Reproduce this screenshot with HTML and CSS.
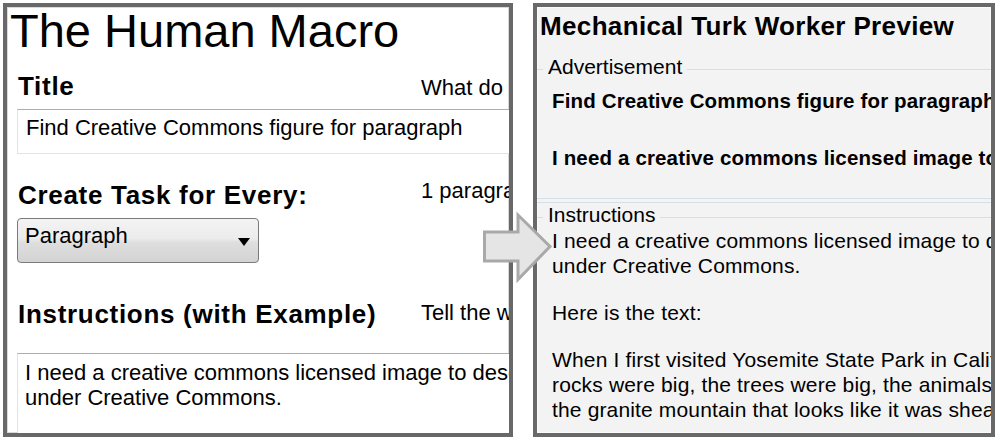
FILE: index.html
```html
<!DOCTYPE html>
<html lang="en">
<head>
<meta charset="utf-8">
<title>The Human Macro</title>
<link rel="stylesheet" href="styles.css">
</head>
<body>
<div class="stage">
  <section class="panel editor">
    <h1 class="app-title">The Human Macro</h1>

    <div class="field field--title">
      <div class="field-head">
        <h2 class="field-label">Title</h2>
        <p class="field-hint hint--title">What do you want workers to see as the task title?</p>
      </div>
      <div class="textbox textbox--single">Find Creative Commons figure for paragraph</div>
    </div>

    <div class="field field--unit">
      <div class="field-head">
        <h2 class="field-label">Create Task for Every:</h2>
        <p class="field-hint hint--unit">1 paragraph = 1 task</p>
      </div>
      <div class="select">
        <span class="select-value">Paragraph</span>
        <span class="select-caret"></span>
      </div>
    </div>

    <div class="field field--instructions">
      <div class="field-head">
        <h2 class="field-label">Instructions (with Example)</h2>
        <p class="field-hint hint--instructions">Tell the workers what you need done</p>
      </div>
      <div class="textbox textbox--multi">I need a creative commons licensed image to describe this paragraph. Make sure it is licensed<br>under Creative Commons.</div>
    </div>
  </section>

  <section class="panel preview">
    <h2 class="preview-title">Mechanical Turk Worker Preview</h2>

    <fieldset class="group group--ad">
      <legend class="group-legend">Advertisement</legend>
      <div class="group-body ad-body">
        <p class="ad-line">Find Creative Commons figure for paragraph</p>
        <p class="ad-line">I need a creative commons licensed image to describe this paragraph.</p>
      </div>
    </fieldset>

    <div class="group-divider"></div>

    <fieldset class="group group--instr">
      <legend class="group-legend">Instructions</legend>
      <div class="group-body instr-body">
        <p>I need a creative commons licensed image to describe this paragraph. Make sure it is licensed<br>under Creative Commons.</p>
        <p>Here is the text:</p>
        <p>When I first visited Yosemite State Park in California, I was a boy. I was amazed by how big everything was. The<br>rocks were big, the trees were big, the animals were big, and the waterfalls were big. I was most impressed by<br>the granite mountain that looks like it was sheared in half, called Half Dome.</p>
        <p class="instr-more">My family and I hiked all over the valley.</p>
      </div>
    </fieldset>
  </section>

  <svg class="flow-arrow" width="76" height="76" viewBox="0 0 76 76" aria-hidden="true">
    <polygon points="4.5,22 38,22 38,5 70,36.5 38,69.5 38,51 4.5,51" fill="#e5e5e5" stroke="#a9a9a9" stroke-width="3" stroke-linejoin="miter"/>
  </svg>
</div>
</body>
</html>
```

FILE: styles.css
```css
* {
  box-sizing: border-box;
}

body {
  margin: 0;
  background: #ffffff;
  color: #000000;
  font-family: "Liberation Sans", Arial, sans-serif;
}

.stage {
  position: relative;
  display: flex;
  gap: 20px;
  padding: 3px 0 0 3px;
}

.panel {
  flex: none;
  height: 434px;
  border: 4px solid #686868;
  overflow: hidden;
}

/* ---------- left: editor ---------- */

.editor {
  width: 510px;
  background: #ffffff;
  padding-left: 10px;
  box-shadow: inset 0 0 0 1px #d9d9d9;
}

.app-title {
  margin: 0 0 0 -7px;
  font-size: 47px;
  line-height: 47px;
  font-weight: 400;
  white-space: nowrap;
}

.field--title {
  margin-top: 17px;
}

.field--unit {
  margin-top: 26px;
}

.field--instructions {
  margin-top: 36px;
}

.field-head {
  display: flex;
  align-items: flex-start;
}

.field-label {
  flex: none;
  width: 404px;
  margin: 0;
  padding-left: 1px;
  font-size: 26px;
  line-height: 30px;
  font-weight: 700;
  letter-spacing: 0.7px;
  white-space: nowrap;
}

.field-hint {
  margin: 0;
  font-size: 22px;
  line-height: 25px;
  white-space: nowrap;
}

.hint--title {
  margin-top: 4px;
}

.hint--unit {
  margin-top: -2px;
}

.hint--instructions {
  margin-top: 1px;
}

.textbox {
  width: 560px;
  margin-top: 8px;
  border: 1px solid #e2e3ea;
  border-top-color: #abadb3;
  background: #ffffff;
  font-size: 22px;
  line-height: 25px;
  white-space: nowrap;
}

.textbox--single {
  height: 45px;
  padding: 5px 8px;
}

.textbox--multi {
  height: 110px;
  margin-top: 24px;
  padding: 6px 7px;
}

.select {
  display: flex;
  justify-content: space-between;
  align-items: flex-start;
  width: 242px;
  height: 45px;
  margin-top: 8px;
  padding: 4px 8px 0 7px;
  border: 1px solid #7a7a7a;
  border-radius: 4px;
  background: linear-gradient(#f3f3f3 0%, #ececec 45%, #dedede 55%, #d3d3d3 100%);
  font-size: 22px;
  line-height: 25px;
}

.select-caret {
  width: 0;
  height: 0;
  margin-top: 15px;
  border-left: 6.5px solid transparent;
  border-right: 6.5px solid transparent;
  border-top: 8px solid #000000;
}

/* ---------- right: worker preview ---------- */

.preview {
  width: 462px;
  padding-top: 4px;
  background: #f3f3f3;
  box-shadow: inset 0 0 0 1px #fbfbfb;
}

.preview-title {
  margin: 0;
  padding-left: 3px;
  font-size: 26px;
  line-height: 30px;
  font-weight: 700;
  letter-spacing: 0.35px;
  white-space: nowrap;
}

.group {
  min-width: 0;
  margin: 0;
  padding: 0 0 0 6px;
  border: 0;
  border-top: 1px solid #d5dfe5;
}

.group--ad {
  margin-top: 16px;
  padding-bottom: 28px;
  border-bottom: 1px solid #d5dfe5;
}

.group--instr {
  margin-top: 2px;
}

.group-legend {
  padding: 0 5px 5px;
  font-size: 21px;
  line-height: 20px;
  white-space: nowrap;
}

.group-divider {
  margin-top: 3px;
  border-top: 1px solid #d5dfe5;
}

.group-body {
  padding-left: 9px;
}

.ad-body {
  margin-top: 7px;
}

.ad-line {
  margin: 0;
  font-size: 20.5px;
  line-height: 24px;
  font-weight: 700;
  letter-spacing: 0.15px;
  white-space: nowrap;
}

.ad-line + .ad-line {
  margin-top: 33px;
}

.instr-body {
  margin-top: -2px;
}

.instr-body p {
  margin: 0;
  font-size: 21px;
  line-height: 25px;
  letter-spacing: 0.15px;
  white-space: nowrap;
}

.instr-body p + p {
  margin-top: 22px;
}

.instr-body .instr-more {
  margin-top: 8px;
}

/* ---------- overlay arrow between the panels ---------- */

.flow-arrow {
  position: absolute;
  left: 480px;
  top: 210px;
  overflow: visible;
}
```
